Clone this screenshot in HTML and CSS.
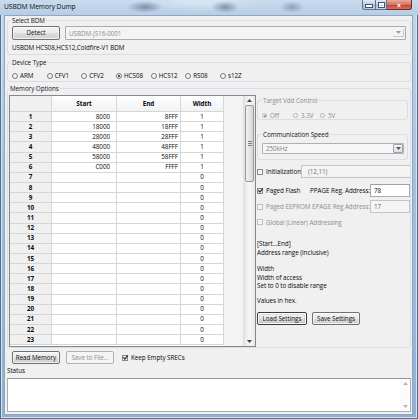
FILE: index.html
```html
<!DOCTYPE html>
<html>
<head>
<meta charset="utf-8">
<title>USBDM Memory Dump</title>
<link rel="stylesheet" href="styles.css">
</head>
<body>
<div class="window">
  <div class="titlebar">
    <span class="title">USBDM Memory Dump</span>
    <div class="ctrls">
      <span class="wbtn wmin"><i class="glyph-min"></i></span>
      <span class="wbtn wmax"><i class="glyph-max"></i></span>
      <span class="wbtn wclose">x</span>
    </div>
  </div>
  <div class="client">
    <fieldset class="group g-bdm">
      <legend>Select BDM</legend>
      <div class="bdm-row">
        <button class="btn detect">Detect</button>
        <div class="combo combo-bdm disabled">
          <span class="combo-text">USBDM-JS16-0001</span>
          <span class="combo-arrow"><svg width="5" height="3" viewBox="0 0 5 3"><path d="M0 0H5L2.5 3Z" fill="#9a9a9a"/></svg></span>
        </div>
      </div>
      <div class="bdm-desc">USBDM HCS08,HCS12,Coldfire-V1 BDM</div>
    </fieldset>

    <fieldset class="group g-dev">
      <legend>Device Type</legend>
      <div class="radios">
        <label class="radio"><span class="rb"></span>ARM</label>
        <label class="radio"><span class="rb"></span>CFV1</label>
        <label class="radio"><span class="rb"></span>CFV2</label>
        <label class="radio"><span class="rb on"></span>HCS08</label>
        <label class="radio"><span class="rb"></span>HCS12</label>
        <label class="radio"><span class="rb"></span>RS08</label>
        <label class="radio"><span class="rb"></span>s12Z</label>
      </div>
    </fieldset>

    <fieldset class="group g-mem">
      <legend>Memory Options</legend>
      <div class="mem-body">
        <div class="tableview">
          <div class="grid">
            <div class="hc corner"></div><div class="hc">Start</div><div class="hc">End</div><div class="hc">Width</div>
            <div class="rh">1</div><div class="c num">8000</div><div class="c end">8FFF</div><div class="c w">1</div>
            <div class="rh">2</div><div class="c num">18000</div><div class="c end">18FFF</div><div class="c w">1</div>
            <div class="rh">3</div><div class="c num">28000</div><div class="c end">28FFF</div><div class="c w">1</div>
            <div class="rh">4</div><div class="c num">48000</div><div class="c end">48FFF</div><div class="c w">1</div>
            <div class="rh">5</div><div class="c num">58000</div><div class="c end">58FFF</div><div class="c w">1</div>
            <div class="rh">6</div><div class="c num">C000</div><div class="c end">FFFF</div><div class="c w">1</div>
            <div class="rh">7</div><div class="c num"></div><div class="c end"></div><div class="c w">0</div>
            <div class="rh">8</div><div class="c num"></div><div class="c end"></div><div class="c w">0</div>
            <div class="rh">9</div><div class="c num"></div><div class="c end"></div><div class="c w">0</div>
            <div class="rh">10</div><div class="c num"></div><div class="c end"></div><div class="c w">0</div>
            <div class="rh">11</div><div class="c num"></div><div class="c end"></div><div class="c w">0</div>
            <div class="rh">12</div><div class="c num"></div><div class="c end"></div><div class="c w">0</div>
            <div class="rh">13</div><div class="c num"></div><div class="c end"></div><div class="c w">0</div>
            <div class="rh">14</div><div class="c num"></div><div class="c end"></div><div class="c w">0</div>
            <div class="rh">15</div><div class="c num"></div><div class="c end"></div><div class="c w">0</div>
            <div class="rh">16</div><div class="c num"></div><div class="c end"></div><div class="c w">0</div>
            <div class="rh">17</div><div class="c num"></div><div class="c end"></div><div class="c w">0</div>
            <div class="rh">18</div><div class="c num"></div><div class="c end"></div><div class="c w">0</div>
            <div class="rh">19</div><div class="c num"></div><div class="c end"></div><div class="c w">0</div>
            <div class="rh">20</div><div class="c num"></div><div class="c end"></div><div class="c w">0</div>
            <div class="rh">21</div><div class="c num"></div><div class="c end"></div><div class="c w">0</div>
            <div class="rh">22</div><div class="c num"></div><div class="c end"></div><div class="c w">0</div>
            <div class="rh">23</div><div class="c num"></div><div class="c end"></div><div class="c w">0</div>
          </div>
          <div class="filler"></div>
          <div class="vscroll">
            <span class="sarrow"><svg width="5" height="3" viewBox="0 0 5 3"><path d="M2.5 0L5 3H0Z" fill="#444"/></svg></span>
            <span class="thumb"><i></i><i></i><i></i></span>
            <span class="strack"></span>
            <span class="sarrow"><svg width="5" height="3" viewBox="0 0 5 3"><path d="M0 0H5L2.5 3Z" fill="#444"/></svg></span>
          </div>
        </div>

        <div class="panel">
          <fieldset class="group g-vdd">
            <legend class="dis">Target Vdd Control</legend>
            <div class="vdd-radios">
              <label class="radio dis"><span class="rb on dis"></span>Off</label>
              <label class="radio dis"><span class="rb dis"></span>3.3V</label>
              <label class="radio dis"><span class="rb dis"></span>5V</label>
            </div>
          </fieldset>

          <fieldset class="group g-speed">
            <legend>Communication Speed</legend>
            <div class="combo combo-speed">
              <span class="combo-text">250kHz</span>
              <span class="combo-btn"><svg width="5" height="3" viewBox="0 0 5 3"><path d="M0 0H5L2.5 3Z" fill="#555"/></svg></span>
            </div>
          </fieldset>

          <div class="opt-row init-row">
            <label class="check lbl-init"><span class="cb"></span>Initialization</label>
            <span class="tb tb-dis wide">(12,11)</span>
          </div>
          <div class="opt-row page-row">
            <label class="check"><span class="cb"><svg width="7" height="7" viewBox="0 0 7 7"><path d="M1.3 3.3L2.9 5L5.8 1.3" fill="none" stroke="#2a2a2a" stroke-width="1.2"/></svg></span>Paged Flash</label>
            <span class="reg-label">PPAGE Reg. Address:</span>
            <span class="tb">78</span>
          </div>
          <div class="opt-row page-row eeprom-row">
            <label class="check dis"><span class="cb dis"></span>Paged EEPROM</label>
            <span class="reg-label dis">EPAGE Reg Address:</span>
            <span class="tb tb-dis">17</span>
          </div>
          <div class="opt-row global-row">
            <label class="check dis"><span class="cb dis"></span>Global (Linear) Addressing</label>
          </div>

          <div class="help">
            <p>[Start...End]<br>Address range (inclusive)</p>
            <p>Width<br>Width of access<br>Set to 0 to disable range</p>
            <p>Values in hex.</p>
          </div>

          <div class="settings-btns">
            <button class="btn focused">Load Settings</button>
            <button class="btn">Save Settings</button>
          </div>
        </div>
      </div>
    </fieldset>

    <div class="actions">
      <button class="btn act">Read Memory</button>
      <button class="btn act btn-dis">Save to File...</button>
      <label class="check keep"><span class="cb"><svg width="7" height="7" viewBox="0 0 7 7"><path d="M1.3 3.3L2.9 5L5.8 1.3" fill="none" stroke="#2a2a2a" stroke-width="1.2"/></svg></span>Keep Empty SRECs</label>
    </div>
    <div class="status-label">Status</div>
    <div class="status-box">
      <div class="status-text"></div>
      <div class="status-scroll">
        <svg width="5" height="3" viewBox="0 0 5 3"><path d="M2.5 0L5 3H0Z" fill="#b5b5b5"/></svg>
        <svg width="5" height="3" viewBox="0 0 5 3"><path d="M0 0H5L2.5 3Z" fill="#b5b5b5"/></svg>
      </div>
    </div>
  </div>
</div>
</body>
</html>
```

FILE: styles.css
```css
* { box-sizing: border-box; }
html, body { margin: 0; padding: 0; }
body {
  width: 418px;
  height: 419px;
  overflow: hidden;
  font-family: "Open Sans", "Noto Sans", sans-serif;
  font-size: 6.3px;
  letter-spacing: -0.05px;
  color: #0a0a0a;
  background: #7d9ec4;
}

.window {
  width: 418px;
  height: 419px;
  display: flex;
  flex-direction: column;
  background: linear-gradient(#c4d6ea, #a9c2dc 40%, #8fb0d3);
  box-shadow: inset 0 0 0 1px #4e6f95, inset 0 0 0 2px #d7e4f1;
}

/* title bar */
.titlebar {
  height: 15px;
  display: flex;
  align-items: flex-start;
  background:
    radial-gradient(ellipse 18px 6px at 145px 7px, rgba(40,60,90,0.45), transparent),
    radial-gradient(ellipse 14px 6px at 225px 7px, rgba(40,60,90,0.45), transparent),
    radial-gradient(ellipse 12px 6px at 292px 7px, rgba(40,60,90,0.35), transparent),
    radial-gradient(ellipse 60px 10px at 200px 2px, rgba(255,255,255,0.35), transparent),
    linear-gradient(#c9dbee, #b7cde4);
}
.title {
  padding: 3px 0 0 4px;
  line-height: 8px;
  font-size: 6.7px;
  color: #0c0c0c;
}
.ctrls {
  margin-left: auto;
  margin-right: 6px;
  display: flex;
  height: 10px;
}
.wbtn {
  height: 10px;
  display: flex;
  align-items: center;
  justify-content: center;
  border: 1px solid #5a7593;
  border-top: none;
}
.wmin {
  width: 14px;
  border-radius: 0 0 0 3px;
  background: linear-gradient(#e4ecf5, #bccde0 50%, #a3b9d3 51%, #c1d4e8);
}
.wmax {
  width: 11px;
  border-left: none;
  background: linear-gradient(#e4ecf5, #bccde0 50%, #a3b9d3 51%, #c1d4e8);
}
.wclose {
  width: 25px;
  border-left: none;
  border-color: #6e2a25;
  border-radius: 0 0 3px 0;
  background: linear-gradient(#e9a99c, #d47466 50%, #c2402c 51%, #d9715a);
  color: #fff;
  font-family: "DejaVu Sans", sans-serif;
  font-weight: bold;
  font-size: 6px;
  line-height: 6px;
}
.glyph-min {
  display: block;
  width: 6px;
  height: 2px;
  margin-top: 3px;
  background: #fff;
  box-shadow: 0 0 0 1px #44546a;
}
.glyph-max {
  display: block;
  width: 5px;
  height: 4px;
  border: 1px solid #fff;
  border-top-width: 2px;
  box-shadow: 0 0 0 1px #44546a;
}

/* client */
.client {
  flex: 1;
  margin: 0 5px 4px 4px;
  border: 1px solid #8fa6bf;
  background: #f0f0f0;
  padding: 0 1px 2px 2px;
  display: flex;
  flex-direction: column;
}

.group {
  margin: 0;
  border: 1px solid #d5dfe5;
  border-radius: 3px;
  min-width: 0;
}
.group legend {
  padding: 0 1px;
  margin-left: -1px;
  line-height: 9px;
  color: #151515;
}
.dis { color: #8d8d8d !important; }

.g-bdm { padding: 1px 4px 2px 4px; }
.bdm-row { display: flex; gap: 5px; }
.bdm-desc { margin-top: 3px; line-height: 9px; }

.btn {
  font: inherit;
  letter-spacing: inherit;
  color: #111;
  margin: 0;
  padding: 0;
  border: 1px solid #707070;
  border-radius: 2px;
  background: linear-gradient(#f2f2f2, #ebebeb 48%, #dddddd 52%, #cfcfcf);
  box-shadow: inset 0 0 0 1px rgba(255,255,255,0.7);
  line-height: 10px;
}
.detect { width: 48px; height: 14px; }

.combo {
  display: flex;
  align-items: center;
  height: 14px;
  border: 1px solid #a5acb5;
  border-radius: 1px;
  background: #f4f4f4;
}
.combo-bdm { flex: 1; margin-right: 0; }
.combo-text { flex: 1; padding-left: 3px; color: #8d8d8d; line-height: 9px; }
.combo-arrow { width: 11px; display: flex; justify-content: center; }
.combo-bdm .combo-arrow { border-right: 1px solid #c8c8c8; border-bottom: 1px solid #c8c8c8; height: 8px; align-items: center; margin-right: 1px; }

.g-dev { margin-top: 3px; padding: 4px 4px 1px 4px; }
.radios {
  display: grid;
  grid-template-columns: repeat(7, 34.67px);
  height: 9px;
  align-items: center;
}
.radio {
  display: flex;
  align-items: center;
  gap: 2px;
  line-height: 9px;
  white-space: nowrap;
}
.rb {
  width: 6px;
  height: 6px;
  border-radius: 50%;
  border: 1px solid #7c7c7c;
  background: radial-gradient(circle at 50% 40%, #fff, #e3e3e3);
  display: flex;
  align-items: center;
  justify-content: center;
  flex: none;
}
.rb.on::after {
  content: "";
  width: 2px;
  height: 2px;
  border-radius: 50%;
  background: #1e1e1e;
}
.rb.dis { border-color: #b5b5b5; background: #f4f4f4; }
.rb.on.dis::after { background: #8a8a8a; }

/* memory options */
.g-mem { margin-top: 2px; padding: 2px 0 0 1px; }
.g-mem legend { margin-left: 0; }
.mem-body { display: flex; height: 252px; }

.tableview {
  width: 247px;
  flex: none;
  display: flex;
  border: 1px solid #828790;
  background: #f3f3f3;
}
.grid {
  width: 214px;
  display: grid;
  grid-template-columns: 42px 65px 64px 43px;
  grid-template-rows: 16px repeat(23, 10.15px);
  align-content: start;
  background: #fff;
}
.grid > div {
  border-right: 1px solid #d6d6d6;
  border-bottom: 1px solid #d6d6d6;
  display: flex;
  align-items: center;
  line-height: 8px;
  overflow: hidden;
}
.hc {
  justify-content: center;
  font-weight: 700;
  background: linear-gradient(#ffffff, #f7f8fa 50%, #f1f2f4);
  border-color: #d5d5d5;
}
.hc.corner { background: #f0f0f0; }
.rh {
  justify-content: center;
  font-weight: 700;
  background: #f0f0f0;
}
.c.num { justify-content: flex-end; padding-right: 6px; }
.c.end { justify-content: flex-end; padding-right: 2px; }
.c.w { justify-content: center; }

.filler { width: 19px; flex: none; background: #f3f3f3; }

.vscroll {
  width: 12px;
  flex: none;
  display: flex;
  flex-direction: column;
  align-items: center;
  background: linear-gradient(90deg, #e4e4e4, #f4f4f4 40%, #f4f4f4 60%, #e8e8e8);
  border-left: 1px solid #e0e0e0;
}
.sarrow { height: 9px; display: flex; align-items: center; justify-content: center; }
.thumb {
  width: 9px;
  height: 77px;
  border: 1px solid #999;
  border-radius: 2px;
  background: linear-gradient(90deg, #f3f3f3, #e4e4e4 50%, #d6d6d6);
  display: flex;
  flex-direction: column;
  justify-content: center;
  align-items: center;
  gap: 1px;
}
.thumb i { display: block; width: 4px; height: 1px; background: #7d7d7d; }
.strack { flex: 1; }

.panel {
  flex: 1;
  min-width: 0;
  overflow: hidden;
  padding: 0 0 0 1px;
  display: flex;
  flex-direction: column;
}
.g-vdd {
  margin: 1px 2px 0 0;
  padding: 6px 3px 0 4px;
}
.vdd-radios {
  display: grid;
  grid-template-columns: 31px 27px auto;
  height: 8px;
  align-items: center;
}
.vdd-radios .rb { width: 5px; height: 5px; }
.vdd-radios .radio { gap: 3px; }

.g-speed {
  margin: 10px 2px 0 0;
  padding: 4px 3px 5px 4px;
}
.combo-speed { height: 11px; border-color: #acb1b8; background: #f6f6f6; }
.combo-speed .combo-text { color: #7e7e7e; }
.combo-btn {
  width: 10px;
  height: 9px;
  margin-right: 0;
  border: 1px solid #9da3aa;
  border-radius: 1px;
  background: linear-gradient(#f6f6f6, #dedede);
  display: flex;
  align-items: center;
  justify-content: center;
}

.opt-row { display: flex; align-items: center; height: 13px; white-space: nowrap; }
.init-row { margin-top: 5px; }
.page-row { margin-top: 6px; }
.eeprom-row { margin-top: 3px; }
.global-row { margin-top: 5px; height: 8px; }

.check { display: flex; align-items: center; gap: 3px; line-height: 9px; white-space: nowrap; }
.cb {
  width: 6px;
  height: 6px;
  border: 1px solid #8a8a8a;
  background: linear-gradient(135deg, #e6e6e6, #ffffff);
  flex: none;
  display: flex;
  align-items: center;
  justify-content: center;
  overflow: visible;
}
.cb svg { flex: none; }
.cb.dis { border-color: #c0c0c0; background: #f4f4f4; }
.lbl-init { width: 51px; }
.page-row .check { width: 62px; }
.reg-label { width: 62px; }

.tb {
  height: 13px;
  width: 40px;
  flex: none;
  border: 1px solid #abadb3;
  border-top-color: #9aa0a8;
  background: #fff;
  display: flex;
  align-items: center;
  padding-left: 3px;
  line-height: 9px;
}
.tb-dis { background: #f4f4f4; border-color: #c2c5ca; color: #6d6d6d; }
.tb.wide { width: 120px; padding-left: 6px; }

.help { margin-top: 14px; line-height: 8.5px; }
.help p { margin: 0; }
.help p + p { margin-top: 8px; }
.help p:last-child { margin-top: 6.5px; }

.settings-btns { display: flex; gap: 5px; margin-top: 6.5px; }
.settings-btns .btn { width: 50px; height: 13px; }
.settings-btns .btn + .btn { width: 48px; }
.btn.focused { border-color: #3c3c3c; box-shadow: inset 0 0 0 1px #fff, inset 0 0 0 2px rgba(0,0,0,0.08); }

/* bottom */
.actions {
  margin-top: 3px;
  display: flex;
  align-items: center;
  gap: 6px;
  padding-left: 5px;
  height: 13px;
}
.btn.act { width: 48px; height: 13px; }
.btn-dis {
  border-color: #b0b3b6;
  background: #f4f4f4;
  color: #8d8d8d;
  box-shadow: none;
}
.keep { margin-left: 2px; }

.status-label { margin-top: 2px; line-height: 9px; }
.status-box {
  margin-top: 3px;
  height: 34px;
  border: 1px solid #abadb3;
  border-top-color: #8e949c;
  background: #fff;
  display: flex;
}
.status-text { flex: 1; }
.status-scroll {
  width: 10px;
  display: flex;
  flex-direction: column;
  align-items: center;
  justify-content: space-between;
  padding: 3px 0;
  background: #fbfbfb;
}
```
